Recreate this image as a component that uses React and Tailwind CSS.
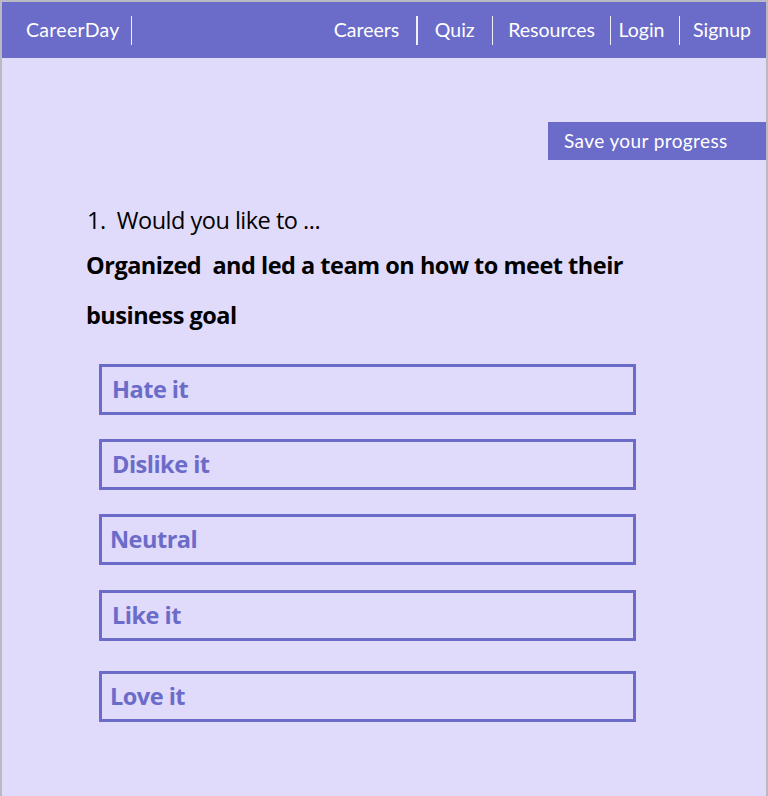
import React from "react";

const options = [
  { label: "Hate it", pl: "pl-[10px]", mt: "mt-0" },
  { label: "Dislike it", pl: "pl-[10px]", mt: "mt-[24px]" },
  { label: "Neutral", pl: "pl-[8px]", mt: "mt-[24px]" },
  { label: "Like it", pl: "pl-[10px]", mt: "mt-[25px]" },
  { label: "Love it", pl: "pl-[8px]", mt: "mt-[30px]" },
];

export default function App() {
  return (
    <div className="w-[768px] h-[796px] bg-[#e0dafb] border-2 border-b-0 border-[#b9b9c4] box-border flex flex-col font-['Lato',sans-serif]">
      <header className="h-[56px] bg-[#6b6bc9] flex items-center text-white text-[19.5px] shrink-0">
        <div className="flex items-center pl-[24px]">
          <span className="tracking-[0.3px]">CareerDay</span>
          <span className="ml-[11px] w-[1.5px] h-[29px] bg-white/90" />
        </div>
        <nav className="ml-auto flex items-center pr-[15px]">
          <span className="mr-[17px]">Careers</span>
          <span className="w-[1.5px] h-[29px] bg-white/90" />
          <span className="ml-[17px] mr-[17px]">Quiz</span>
          <span className="w-[1.5px] h-[29px] bg-white/90" />
          <span className="ml-[15px] mr-[15px]">Resources</span>
          <span className="w-[1.5px] h-[29px] bg-white/90" />
          <span className="ml-[7px] mr-[14px]">Login</span>
          <span className="w-[1.5px] h-[29px] bg-white/90" />
          <span className="ml-[13px]">Signup</span>
        </nav>
      </header>

      <div className="flex justify-end mt-[64px]">
        <button className="w-[218px] h-[38px] bg-[#6b6bc9] text-white text-[19px] text-left pl-[16px] tracking-[0.4px]">
          Save your progress
        </button>
      </div>

      <div className="pl-[84px] mt-[43px] font-['Open_Sans',sans-serif] text-black">
        <p className="text-[23.5px] leading-[34px] tracking-[-0.5px] pl-[1px]">
          1.&nbsp; Would you like to ...
        </p>
        <p className="text-[23.5px] font-bold leading-[50px] tracking-[-0.5px] w-[580px] mt-[3px]">
          Organized&nbsp; and led a team on how to meet their business goal
        </p>
      </div>

      <div className="pl-[97px] mt-[24px] flex flex-col font-['Open_Sans',sans-serif]">
        {options.map((o) => (
          <div
            key={o.label}
            className={`${o.mt} w-[537px] h-[51px] border-[3px] border-[#6b6bc9] flex items-center ${o.pl} text-[#6b6bc9] text-[23.5px] font-bold tracking-[-0.5px]`}
          >
            {o.label}
          </div>
        ))}
      </div>
    </div>
  );
}
